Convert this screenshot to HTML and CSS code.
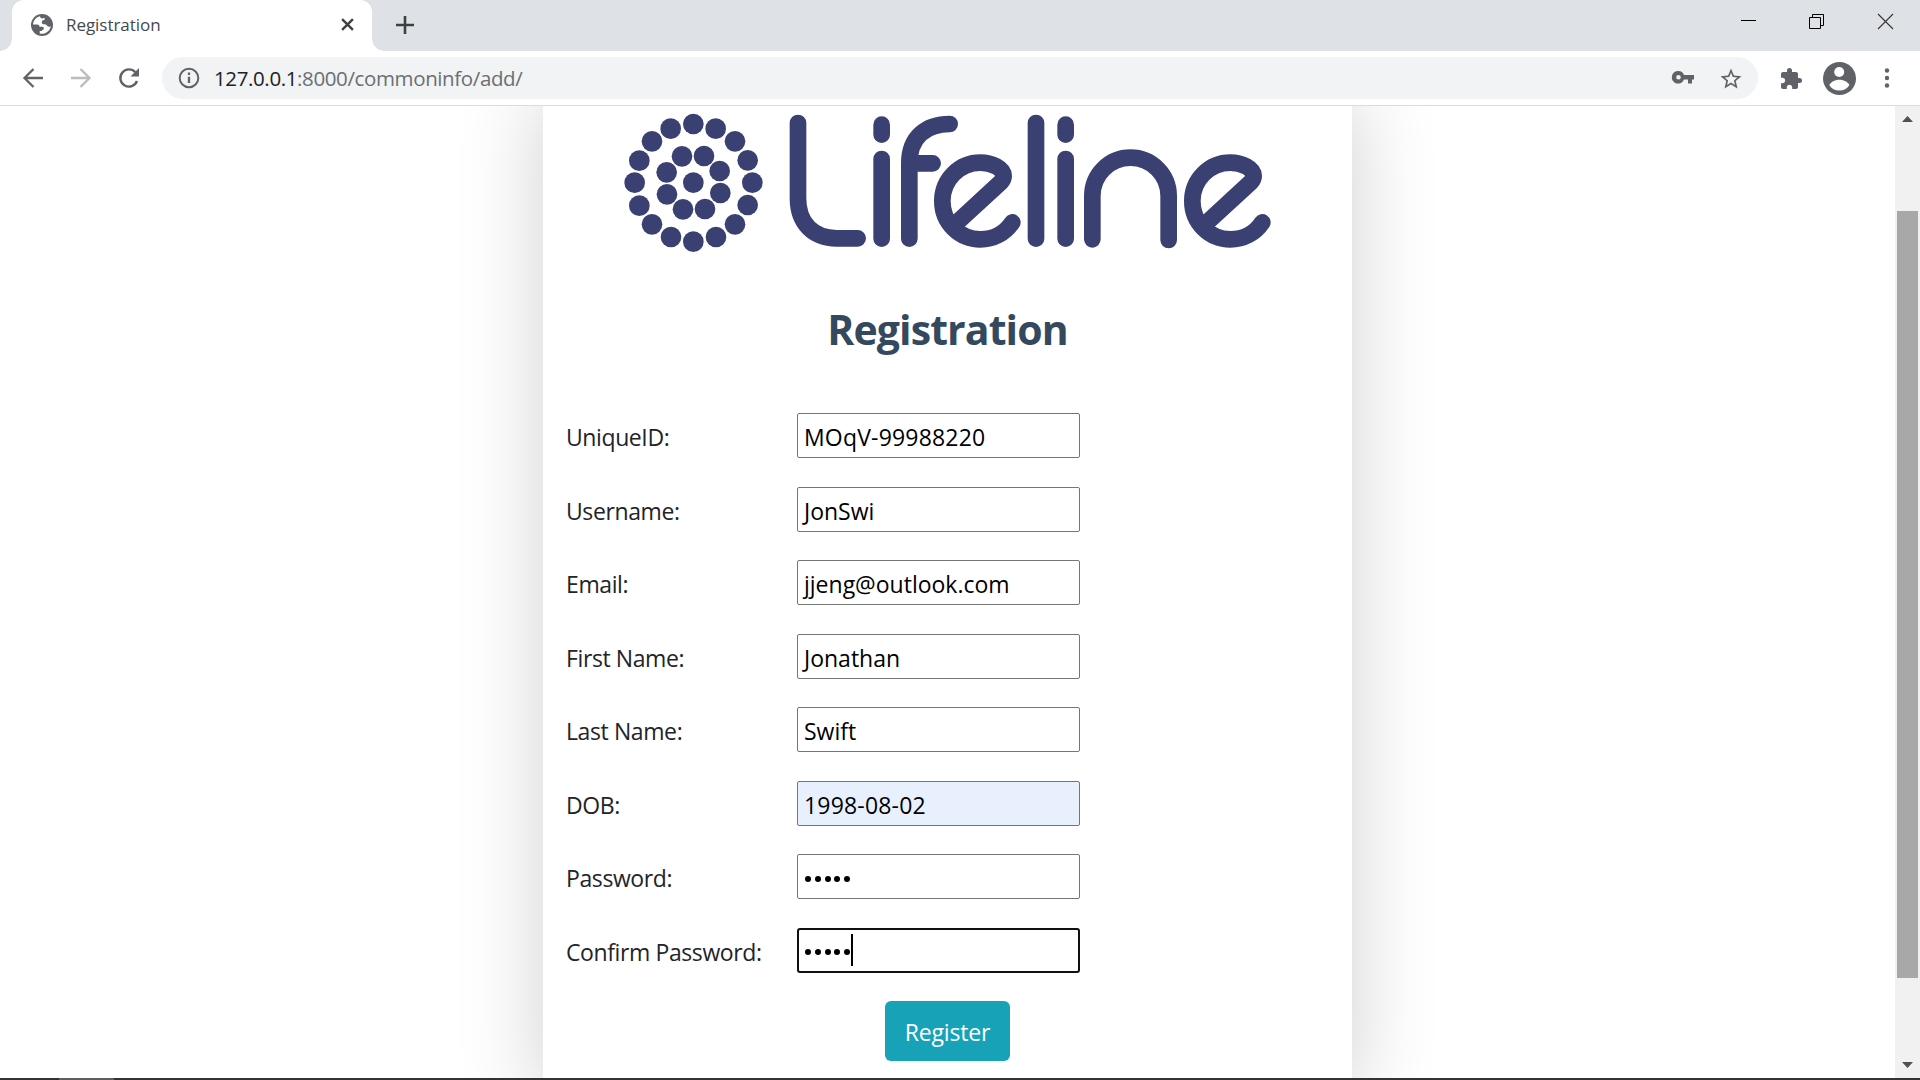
FILE: index.html
```html
<!DOCTYPE html>
<html lang="en">
<head>
<meta charset="utf-8">
<title>Registration</title>
<link rel="stylesheet" href="styles.css">
</head>
<body>
<header class="tabstrip">
  <div class="tab">
    <svg class="globe" viewBox="0 0 24 24"><circle cx="12" cy="12" r="12" fill="#5f6368"/><path fill="#fff" d="M9.800 2.500C5.500 3.500 2.400 7.200 2.200 11.500H6.500C9 11.500 9.200 13 9.200 14H12.500C14 14 14.500 16 13.500 17.200L12 17.500V18.500H9.500V21.400C15.500 22.600 21 18.500 21.600 13C20 14.400 18.500 14.300 17.500 12.600C16.500 11 15 11.400 13.500 11.200C11.500 10.800 11 7.500 13.400 6.800C15 6.400 15.500 5 14.500 4C12.500 5.500 10 5 9.800 2.500Z"/></svg>
    <span class="tab-title">Registration</span>
    <svg class="tab-close" viewBox="0 0 12 12"><path d="M1 1L11 11M11 1L1 11" stroke="#3c4043" stroke-width="2.200"/></svg>
  </div>
  <svg class="newtab" viewBox="0 0 18 18"><path d="M9 0V18M0 9H18" stroke="#3c4043" stroke-width="2.600"/></svg>
  <div class="window-buttons">
    <svg viewBox="0 0 15 15"><path d="M1 6.500H16" stroke="#000"/></svg>
    <svg viewBox="0 0 15 15"><path d="M.5 3.500H11.500V14.500H.5ZM3.500 3.500V.5H14.500V11.500H11.500" fill="none" stroke="#000"/></svg>
    <svg viewBox="0 0 15 15"><path d="M0 0L15 15M15 0L0 15" stroke="#333" stroke-width="1.100"/></svg>
  </div>
</header>
<nav class="toolbar">
  <div class="nav-buttons">
    <svg viewBox="0 0 20 20"><path d="M20 10H2M10.500 1L1.500 10L10.500 19" fill="none" stroke="#5f6368" stroke-width="2.300"/></svg>
    <svg viewBox="0 0 20 20"><path d="M0 10H18M9.500 1L18.500 10L9.500 19" fill="none" stroke="#babcbe" stroke-width="2.300"/></svg>
    <svg viewBox="0 0 20 20"><path d="M18 13A8.600 8.600 0 1 1 16.300 4.200" fill="none" stroke="#5f6368" stroke-width="2.400"/><path d="M20 0V8.500H11.500Z" fill="#5f6368"/></svg>
  </div>
  <div class="omnibox">
    <svg class="info" viewBox="0 0 22 22"><circle cx="11" cy="11" r="9.300" fill="none" stroke="#5f6368" stroke-width="2"/><path d="M11 9.800V16M11 5.600V8" stroke="#5f6368" stroke-width="2.300"/></svg>
    <span class="url"><b>127.0.0.1</b>:8000/commoninfo/add/</span>
    <svg class="key" viewBox="0 0 22 13"><path fill="#5f6368" fill-rule="evenodd" d="M6.500 0A6.300 6.300 0 0 1 12 4H22V8.500H20V12.500H16V8.500H12A6.300 6.300 0 1 1 6.500 0ZM6.500 4A2.300 2.300 0 1 0 6.500 8.600A2.300 2.300 0 1 0 6.500 4Z"/></svg>
    <svg class="star" viewBox="1.500 1.500 21 20"><path fill="#5f6368" d="M22 9.240l-7.190-.62L12 2 9.190 8.630 2 9.240l5.460 4.730L5.820 21 12 17.270 18.180 21l-1.630-7.030L22 9.240zM12 15.400l-3.760 2.270 1-4.280-3.320-2.880 4.380-.38L12 6.100l1.710 4.040 4.380.38-3.320 2.880 1 4.280L12 15.400z"/></svg>
  </div>
  <svg class="puzzle" viewBox="2 1 21 21"><path fill="#5f6368" d="M20.500 11H19V7c0-1.100-.9-2-2-2h-4V3.500a2.500 2.500 0 0 0-5 0V5H4c-1.100 0-1.990.9-1.990 2v3.800H3.500c1.490 0 2.700 1.210 2.700 2.700s-1.210 2.700-2.700 2.700H2V20c0 1.100.9 2 2 2h3.800v-1.500c0-1.490 1.210-2.700 2.700-2.700s2.700 1.210 2.700 2.700V22H17c1.100 0 2-.9 2-2v-4h1.500a2.500 2.500 0 0 0 0-5z"/></svg>
  <svg class="avatar" viewBox="0 0 33 33"><circle cx="16.500" cy="16.500" r="16.500" fill="#5f6368"/><circle cx="16.200" cy="10" r="5" fill="#fff"/><path d="M6.300 23C8 19.500 13 17.800 16.300 17.800S24.700 19.500 26.400 23C24.300 26.700 20.500 28.500 16.300 28.500S8.300 26.700 6.300 23Z" fill="#fff"/></svg>
  <svg class="dots" viewBox="0 0 6 20"><g fill="#5f6368"><circle cx="3" cy="2.500" r="2.200"/><circle cx="3" cy="10" r="2.200"/><circle cx="3" cy="17.500" r="2.200"/></g></svg>
</nav>
<div class="viewport">
  <main class="page">
    <form class="card">
      <svg class="logo" viewBox="-171 18 2427 480">
        <g fill="#3a4071">
          <circle cx="280" cy="248" r="31"/>
          <circle cx="280" cy="72" r="31"/><circle cx="347" cy="86" r="31"/><circle cx="405" cy="124" r="31"/><circle cx="443" cy="181" r="31"/>
          <circle cx="457" cy="248" r="31"/><circle cx="443" cy="315" r="31"/><circle cx="405" cy="373" r="31"/><circle cx="348" cy="411" r="31"/>
          <circle cx="280" cy="425" r="31"/><circle cx="213" cy="411" r="31"/><circle cx="156" cy="373" r="31"/><circle cx="118" cy="317" r="31"/>
          <circle cx="104" cy="248" r="31"/><circle cx="118" cy="182" r="31"/><circle cx="156" cy="124" r="31"/><circle cx="212" cy="86" r="31"/>
          <circle cx="246" cy="169" r="31"/><circle cx="312" cy="168" r="31"/><circle cx="359" cy="213" r="31"/><circle cx="361" cy="279" r="31"/>
          <circle cx="315" cy="327" r="31"/><circle cx="249" cy="328" r="31"/><circle cx="201" cy="283" r="31"/><circle cx="200" cy="217" r="31"/>
        </g>
        <g fill="none" stroke="#3a4071" stroke-width="50" stroke-linecap="round" stroke-linejoin="round">
          <path d="M594 69V295C594 370 640 415 710 415H773"/>
          <path d="M845 74V104M845 177V416"/>
          <path d="M928 416V190C928 110 980 72 1049 72M928 190H998"/>
          <path d="M1078 361L1203 246Q1211 238 1211 228C1211 205 1175 188 1141 188A114 115 0 0 0 1027 303C1027 370 1080 418 1141 418C1180 418 1215 400 1237 367"/>
          <path d="M1308 69V416"/>
          <path d="M1397 74V104M1397 177V416"/>
          <path d="M1477 418V288A114.500 115 0 0 1 1706 288V420"/>
          <path d="M1828 361L1953 246Q1961 238 1961 228C1961 205 1925 188 1891 188A114 115 0 0 0 1777 303C1777 370 1830 418 1891 418C1930 418 1965 400 1987 367"/>
        </g>
      </svg>
      <h1>Registration</h1>
      <div class="fields">
        <label>UniqueID:</label><div class="input digits"><span>MOqV-99988220</span></div>
        <label>Username:</label><div class="input"><span>JonSwi</span></div>
        <label>Email:</label><div class="input"><span>jjeng@outlook.com</span></div>
        <label>First Name:</label><div class="input"><span>Jonathan</span></div>
        <label>Last Name:</label><div class="input"><span>Swift</span></div>
        <label>DOB:</label><div class="input digits autofilled"><span>1998-08-02</span></div>
        <label>Password:</label><div class="input password"><i></i><i></i><i></i><i></i><i></i></div>
        <label>Confirm Password:</label><div class="input password focused"><i></i><i></i><i></i><i></i><i></i><em class="caret"></em></div>
      </div>
      <button class="register" type="button">Register</button>
    </form>
  </main>
  <aside class="scrollbar">
    <svg class="arrow" viewBox="0 0 11 6"><path d="M0 6L5.500 0L11 6Z" fill="#505050"/></svg>
    <div class="thumb"></div>
    <svg class="arrow" viewBox="0 0 11 6"><path d="M0 0L5.500 6L11 0Z" fill="#505050"/></svg>
  </aside>
</div>
<footer class="taskbar"><div class="task"></div></footer>
</body>
</html>
```
FILE: styles.css
```css
* { box-sizing: border-box; }
body {
  margin: 0;
  width: 1920px;
  height: 1080px;
  display: flex;
  flex-direction: column;
  overflow: hidden;
  background: #fff;
  font-family: "Open Sans", "Noto Sans", sans-serif;
}
svg { display: block; flex: none; overflow: visible; }

.tabstrip {
  height: 51px;
  flex: none;
  display: flex;
  padding-left: 12px;
  background: #dee1e6;
}
.tab {
  width: 360px;
  height: 51px;
  display: flex;
  align-items: center;
  padding: 0 18px 2px 19px;
  background: #fff;
  border-radius: 12px 12px 0 0;
  position: relative;
}
.tab::before, .tab::after {
  content: "";
  position: absolute;
  bottom: 0;
  width: 12px;
  height: 12px;
}
.tab::before { left: -12px; background: radial-gradient(circle at 0 0, #dee1e6 11.500px, #fff 12px); }
.tab::after { right: -12px; background: radial-gradient(circle at 100% 0, #dee1e6 11.500px, #fff 12px); }
.globe { width: 22px; height: 22px; }
.tab-title { margin-left: 13px; flex: 1; font-size: 17px; letter-spacing: -0.050px; color: #45494d; }
.tab-close { width: 13px; height: 13px; }
.newtab { width: 18px; height: 18px; margin: 16px 0 0 24px; }
.window-buttons { margin-left: auto; display: flex; gap: 54px; padding: 14px 27px 0 0; }
.window-buttons svg { width: 15px; height: 15px; }

.toolbar {
  height: 55px;
  flex: none;
  display: flex;
  align-items: center;
  padding: 0 31px 0 23px;
  border-bottom: 1px solid #dadce0;
}
.nav-buttons { display: flex; gap: 28px; width: 139px; }
.nav-buttons svg { width: 20px; height: 20px; }
.omnibox {
  width: 1596px;
  height: 42px;
  display: flex;
  align-items: center;
  padding: 0 16px 0 16px;
  border-radius: 21px;
  background: #f1f3f4;
}
.info { width: 22px; height: 22px; }
.url { margin-left: 14px; flex: 1; font-size: 20.500px; letter-spacing: -0.380px; color: #6b6f73; white-space: nowrap; }
.url b { font-weight: 400; color: #202124; }
.key { width: 22px; height: 13px; margin: 0 26px 1px 0; }
.star { width: 22px; height: 21px; }
.puzzle { width: 21px; height: 21px; margin-left: 23px; }
.avatar { width: 33px; height: 33px; margin-left: 21px; }
.dots { width: 6px; height: 20px; margin-left: auto; margin-right: -1px; }

.viewport { flex: 1; min-height: 0; display: flex; }
.page { flex: 1; display: flex; justify-content: center; overflow: hidden; }
.card {
  width: 809px;
  height: 1004px;
  flex: none;
  display: flex;
  flex-direction: column;
  align-items: center;
  background: #fff;
  box-shadow: 0 -12px 80px rgba(0, 0, 0, 0.190);
}
.logo { width: 809px; height: 160px; }
h1 { margin: 34px 0 55px; font-size: 41px; line-height: 58px; letter-spacing: -0.900px; font-weight: 700; color: #34495e; }
.fields {
  align-self: stretch;
  display: grid;
  grid-template-columns: 231px 283px;
  grid-auto-rows: 45px;
  row-gap: 28.500px;
  padding-left: 23px;
}
.fields label { font-size: 23px; line-height: 48px; letter-spacing: -0.400px; color: #212529; white-space: nowrap; }
.input {
  display: flex;
  height: 45px;
  padding-left: 6px;
  border: 1px solid #767676;
  border-radius: 2px;
  font-size: 23px;
  line-height: 46px;
  letter-spacing: 0;
  white-space: nowrap;
  color: #000;
}
.digits { letter-spacing: 0.180px; }
.autofilled { background: #e8f0fe; }
.password { align-items: center; gap: 3.800px; padding-left: 7px; padding-top: 4px; }
.password i { width: 6px; height: 6px; border-radius: 50%; background: #000; }
.focused { border: 2px solid #101010; border-radius: 3px; padding-left: 6px; }
.caret { width: 2px; height: 32px; margin: -4px 0 0 -3px; background: #000; }
.register {
  width: 125px;
  height: 60px;
  margin-top: 28px;
  padding: 3px 0 0;
  border: 0;
  border-radius: 6px;
  background: #17a2b8;
  color: #fff;
  font: 23px "Open Sans", "Noto Sans", sans-serif;
  letter-spacing: -0.200px;
}
.scrollbar {
  width: 25px;
  display: flex;
  flex-direction: column;
  align-items: center;
  justify-content: space-between;
  padding: 10px 0;
  background: #f1f1f1;
}
.arrow { width: 11px; height: 6px; }
.thumb { width: 21px; height: 767px; margin: 89px 0 84px; flex: none; background: #a8a8a8; }
.taskbar { height: 2px; flex: none; padding-left: 59px; background: #333; }
.task { width: 55px; height: 2px; background: #5e5e5e; }
```
